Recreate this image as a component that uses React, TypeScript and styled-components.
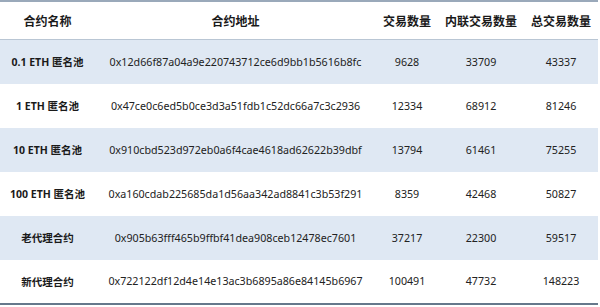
import styled, { createGlobalStyle } from 'styled-components';

const GlobalStyle = createGlobalStyle`
  html, body {
    margin: 0;
    padding: 0;
    background: #fff;
  }
  body {
    font-family: 'Noto Sans', 'Noto Sans CJK SC', sans-serif;
    color: #1f1f1f;
  }
`;

type Row = {
  name: string;
  address: string;
  tx: string;
  inner: string;
  total: string;
};

const rows: Row[] = [
  { name: '0.1 ETH 匿名池', address: '0x12d66f87a04a9e220743712ce6d9bb1b5616b8fc', tx: '9628', inner: '33709', total: '43337' },
  { name: '1 ETH 匿名池', address: '0x47ce0c6ed5b0ce3d3a51fdb1c52dc66a7c3c2936', tx: '12334', inner: '68912', total: '81246' },
  { name: '10 ETH 匿名池', address: '0x910cbd523d972eb0a6f4cae4618ad62622b39dbf', tx: '13794', inner: '61461', total: '75255' },
  { name: '100 ETH 匿名池', address: '0xa160cdab225685da1d56aa342ad8841c3b53f291', tx: '8359', inner: '42468', total: '50827' },
  { name: '老代理合约', address: '0x905b63fff465b9ffbf41dea908ceb12478ec7601', tx: '37217', inner: '22300', total: '59517' },
  { name: '新代理合约', address: '0x722122df12d4e14e13ac3b6895a86e84145b6967', tx: '100491', inner: '47732', total: '148223' },
];

const App = () => {
  return (
    <>
      <GlobalStyle />
      <Table>
        <colgroup>
          <col style={{ width: 95 }} />
          <col style={{ width: 281 }} />
          <col style={{ width: 62 }} />
          <col style={{ width: 86 }} />
          <col style={{ width: 74 }} />
        </colgroup>
        <thead>
          <tr>
            <Th>合约名称</Th>
            <Th>合约地址</Th>
            <Th>交易数量</Th>
            <Th>内联交易数量</Th>
            <Th>总交易数量</Th>
          </tr>
        </thead>
        <tbody>
          {rows.map((r, i) => (
            <Tr key={r.address} $shaded={i % 2 === 0}>
              <NameCell>{r.name}</NameCell>
              <Td>{r.address}</Td>
              <Td>{r.tx}</Td>
              <Td>{r.inner}</Td>
              <Td>{r.total}</Td>
            </Tr>
          ))}
        </tbody>
      </Table>
    </>
  );
};

const Table = styled.table`
  width: 598px;
  table-layout: fixed;
  border-collapse: collapse;
  border-top: 2px solid #9aa9ba;
  border-bottom: 2px solid #66788b;
`;

const Th = styled.th`
  height: 37px;
  padding: 0;
  text-align: center;
  font-size: 12px;
  font-weight: 700;
  color: #1a1a1a;
  border-bottom: 1px solid #b9c6d4;
  white-space: nowrap;
`;

const Tr = styled.tr<{ $shaded: boolean }>`
  height: 44px;
  background: ${(p) => (p.$shaded ? '#dfe8f3' : '#ffffff')};
`;

const Td = styled.td`
  padding: 0;
  text-align: center;
  font-size: 10.7px;
  color: #222;
  white-space: nowrap;
`;

const NameCell = styled(Td)`
  font-weight: 700;
  font-size: 10.5px;
  color: #1a1a1a;
`;

export default App;
